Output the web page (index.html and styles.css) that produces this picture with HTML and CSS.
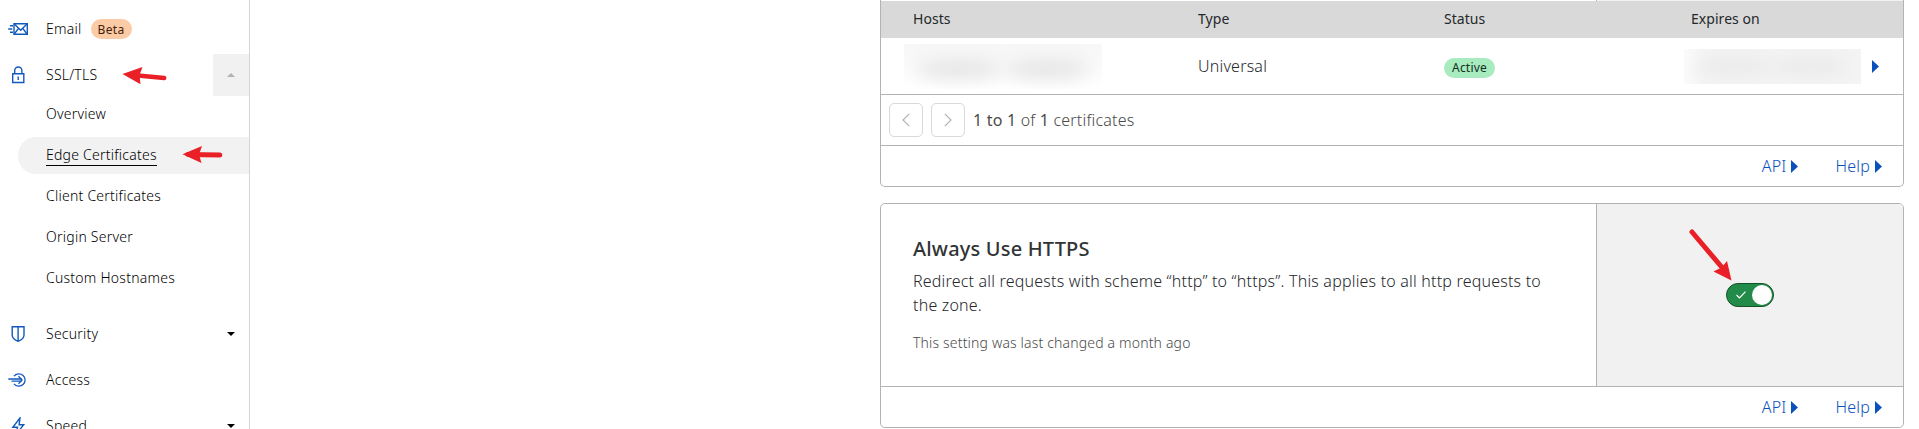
FILE: index.html
```html
<!DOCTYPE html>
<html lang="en">
<head>
<meta charset="utf-8">
<title>Edge Certificates</title>
<link rel="stylesheet" href="styles.css">
</head>
<body>
<div class="app">
  <nav class="sidebar">
    <a class="nav-item">
      <svg class="nav-icon" viewBox="0 0 22 18"><g fill="none" stroke="#1259bd" stroke-width="1.4"><path d="M6 3.7h13.300v10.6H6z"/><path d="M6.3 4l6.400 6.2L19 4M6.3 14l4.200-5.6M19 14l-4.200-5.6"/><path d="M2 5.8h3M.2 9h4M2 12.2h3"/></g></svg>
      <span>Email</span><span class="badge beta">Beta</span>
    </a>
    <div class="nav-item">
      <svg class="nav-icon" viewBox="0 0 22 18"><g fill="none" stroke="#1259bd" stroke-width="1.4"><path d="M4.7 7.7h11.1v8.800H4.7z"/><path d="M6.7 7.5V4.600a3.6 3.6 0 0 1 7.2 0v2.900M10.2 10.5v3.5"/></g></svg>
      <span>SSL/TLS</span>
      <span class="collapse"><svg width="8" height="4" viewBox="0 0 8 4"><path d="M0 4L4 0l4 4z" fill="#b3b3b3"/></svg></span>
      <svg class="arrow arrow-ssl" viewBox="0 0 46 18"><path d="M8 7.700L42.200 11" stroke="#e92027" stroke-width="4.600" stroke-linecap="round"/><path d="M.5 7L20.500 0l-3 8 1 9.300z" fill="#e92027"/></svg>
    </div>
    <div class="subnav">
      <a class="sub-item">Overview</a>
      <a class="sub-item current"><span class="underlined">Edge Certificates</span>
        <svg class="arrow arrow-edge" viewBox="0 0 42 18"><path d="M6 8.500L38 9" stroke="#e92027" stroke-width="4.800" stroke-linecap="round"/><path d="M.5 8.300L20 0l-3 8.500 2.500 8.500z" fill="#e92027"/></svg>
      </a>
      <a class="sub-item">Client Certificates</a>
      <a class="sub-item">Origin Server</a>
      <a class="sub-item">Custom Hostnames</a>
    </div>
    <a class="nav-item">
      <svg class="nav-icon" viewBox="0 0 22 18"><g fill="none" stroke="#1259bd" stroke-width="1.4"><path d="M4.200 1.700h11.800v8.300c0 3-2.500 5-5.900 6.300-3.400-1.300-5.900-3.300-5.900-6.300zM10.100 1.700V16"/></g></svg>
      <span>Security</span>
      <svg class="caret" viewBox="0 0 8 4"><path d="M0 0h8L4 4z"/></svg>
    </a>
    <a class="nav-item">
      <svg class="nav-icon" viewBox="0 0 22 18"><g fill="none" stroke="#1259bd" stroke-width="1.300"><path d="M6 5.200a6.200 6.200 0 1 1 0 7.600M.3 8h13.400M3.500 10.200h10"/><path d="M10.500 5.300L14 9l-3.500 3.700"/></g></svg>
      <span>Access</span>
    </a>
    <a class="nav-item">
      <svg class="nav-icon" viewBox="0 0 22 18"><path d="M12 1L4.800 10.300h4.700L8 17.500l7.700-9.800h-4.600z" fill="none" stroke="#1259bd" stroke-width="1.4"/></svg>
      <span>Speed</span>
      <svg class="caret" viewBox="0 0 8 4"><path d="M0 0h8L4 4z"/></svg>
    </a>
  </nav>
  <main class="content">
    <section class="card card-certs">
      <div class="upper"><div class="upper-side"></div></div>
      <div class="row head"><span>Hosts</span><span>Type</span><span>Status</span><span>Expires on</span></div>
      <div class="row cert">
        <div class="redacted hosts"><i></i><i></i></div>
        <span>Universal</span>
        <span><span class="badge active">Active</span></span>
        <div class="expiry"><div class="redacted date"><i></i><i></i></div><svg class="tri" viewBox="0 0 7 13"><path d="M0 0l7 6.500L0 13z"/></svg></div>
      </div>
      <div class="pager">
        <span class="page-btn"><svg viewBox="0 0 8 14"><path d="M7.200 .8L1 7l6.200 6.200"/></svg></span>
        <span class="page-btn"><svg viewBox="0 0 8 14"><path d="M.8 .8L7 7 .8 13.200"/></svg></span>
        <span class="count"><b>1 to 1</b> of <b>1</b> certificates</span>
      </div>
      <div class="links"><a>API</a><svg class="tri" viewBox="0 0 7 13"><path d="M0 0l7 6.500L0 13z"/></svg><a class="help">Help</a><svg class="tri" viewBox="0 0 7 13"><path d="M0 0l7 6.500L0 13z"/></svg></div>
    </section>
    <section class="card card-https">
      <div class="setting">
        <div class="copy">
          <h2>Always Use HTTPS</h2>
          <p>Redirect all requests with scheme “http” to “https”. This applies to all http requests to<br>the zone.</p>
          <small>This setting was last changed a month ago</small>
        </div>
        <div class="control">
          <span class="toggle"><svg viewBox="0 0 10 8"><path d="M.5 4l3 3L9.500 .7"/></svg><i></i>
            <svg class="arrow arrow-toggle" viewBox="0 0 44 54"><path d="M3 4L36 43" stroke="#e92027" stroke-width="5" stroke-linecap="round"/><path d="M42.500 52.500L38 33l-5.500 6.500-8 4z" fill="#e92027"/></svg>
          </span>
        </div>
      </div>
      <div class="links"><a>API</a><svg class="tri" viewBox="0 0 7 13"><path d="M0 0l7 6.500L0 13z"/></svg><a class="help">Help</a><svg class="tri" viewBox="0 0 7 13"><path d="M0 0l7 6.500L0 13z"/></svg></div>
    </section>
  </main>
</div>
</body>
</html>
```
FILE: styles.css
```css
* { box-sizing: border-box; }
body { margin: 0; font-family: "Noto Sans", "Open Sans", sans-serif; font-weight: 300; letter-spacing: .2px; color: #25282a; background: #fff; overflow: hidden; }
svg { display: block; flex: none; }
.app { display: flex; height: 429px; overflow: hidden; }
.sidebar { width: 250px; flex: none; border-right: 1px solid #d5d5d5; padding-top: 8px; font-size: 14px; letter-spacing: .24px; color: #000; }
.nav-item { display: flex; align-items: center; position: relative; height: 42px; margin-bottom: 4px; padding-left: 8px; }
.nav-item > span:not(.badge):not(.collapse), .sub-item:not(.current) { padding-bottom: 2px; }
.nav-icon { width: 22px; height: 18px; margin-right: 16px; }
.badge { display: inline-flex; align-items: center; justify-content: center; height: 20px; border-radius: 10px; font-size: 12px; font-weight: 400; }
.beta { width: 41px; margin-left: 9px; background: #fbcba5; color: #43220a; letter-spacing: .3px; }
.collapse { display: flex; align-items: center; justify-content: center; width: 36px; height: 42px; margin-left: auto; background: #f1f1f1; }
.caret { width: 8px; height: 4px; margin: 0 14px 0 auto; }
.subnav { display: flex; flex-direction: column; gap: 5px; margin: -4px 0 17px; }
.sub-item { display: flex; align-items: center; position: relative; height: 36px; margin-left: 18px; padding-left: 28px; }
.current { height: 37px; margin-bottom: -1px; padding-bottom: 1px; background: #f2f2f2; border-radius: 18px 0 0 18px; }
.underlined { height: 22px; line-height: 22px; border-bottom: 1px solid #000; }
.arrow { position: absolute; fill: none; }
.arrow-ssl { width: 46px; height: 18px; left: 122px; top: 13px; }
.arrow-edge { width: 42px; height: 18px; left: 164px; top: 9px; }
.content { width: 1024px; margin-left: 630px; }
.card { border: 1px solid #b3b3b3; display: flex; flex-direction: column; }
.card-certs { height: 187px; border-top: 0; border-radius: 0 0 5px 5px; }
.card-https { height: 225px; margin-top: 16px; border-radius: 5px; overflow: hidden; }
.upper { height: 1px; display: flex; justify-content: flex-end; flex: none; }
.upper-side { width: 307px; background: #f2f2f2; border-left: 1px solid #b3b3b3; }
.row { display: grid; grid-template-columns: 285px 246px 247px 1fr; align-items: center; padding-left: 32px; }
.head { height: 37px; padding-bottom: 2px; background: #d9d9d9; font-size: 14px; font-weight: 400; letter-spacing: .05px; }
.cert { height: 57px; border-bottom: 1px solid #b3b3b3; }
.badge.active { width: 51px; background: #a7ebbe; color: #12311d; margin-top: 3px; }
.redacted { display: flex; align-items: center; justify-content: space-between; overflow: hidden; }
.redacted i { border-radius: 50%; background: #e2e2e2; filter: blur(9px); }
.hosts { width: 198px; height: 45px; margin-left: -9px; padding: 6px 12px 0; background: linear-gradient(#f7f7f7, #fff); }
.hosts i { width: 86px; height: 18px; }
.expiry { display: flex; align-items: center; gap: 11px; margin-left: -7px; }
.date { width: 177px; height: 35px; padding: 0 12px; background: linear-gradient(90deg, #fbfbfb, #f4f4f4 12%); }
.date i { width: 78px; height: 14px; background: #e7e7e7; }
.tri { width: 7px; height: 13px; fill: #0b51bd; }
.pager { height: 51px; border-bottom: 1px solid #b3b3b3; display: flex; align-items: center; gap: 8px; padding-left: 8px; }
.page-btn { width: 34px; height: 34px; border: 1px solid #d9d9d9; border-radius: 5px; display: flex; align-items: center; justify-content: center; }
.page-btn svg { width: 8px; height: 14px; fill: none; stroke: #b3b3b3; stroke-width: 1.2; }
.count { color: #4a4a4a; }
.count b { font-weight: 400; }
.links { height: 40px; display: flex; align-items: center; justify-content: flex-end; padding-right: 21px; color: #0b51bd; }
.links .tri { margin-left: 5px; }
.help { margin-left: 37px; }
.setting { height: 183px; display: flex; border-bottom: 1px solid #b3b3b3; }
.copy { flex: 1; padding: 31px 0 0 32px; white-space: nowrap; }
h2 { margin: 0; font-size: 20px; font-weight: 500; line-height: 28px; letter-spacing: .18px; color: #313435; }
p { margin: 6px 0 0; line-height: 24px; }
small { display: block; margin-top: 16px; font-size: 14px; line-height: 20px; letter-spacing: .17px; color: #4a4a4a; }
.control { width: 307px; border-left: 1px solid #b3b3b3; background: #f1f1f1; display: flex; align-items: center; justify-content: center; }
.toggle { position: relative; width: 48px; height: 24px; border: 1px solid #14532a; border-radius: 12px; background: #228b49; display: flex; align-items: center; justify-content: space-between; padding: 0 1px 0 9px; }
.toggle i { width: 20px; height: 20px; border-radius: 50%; background: #fff; }
.toggle svg { width: 10px; height: 8px; fill: none; stroke: #fff; stroke-width: 1.200; }
.toggle .arrow-toggle { width: 44px; height: 54px; left: -38px; top: -56px; stroke-width: 0; }
```
